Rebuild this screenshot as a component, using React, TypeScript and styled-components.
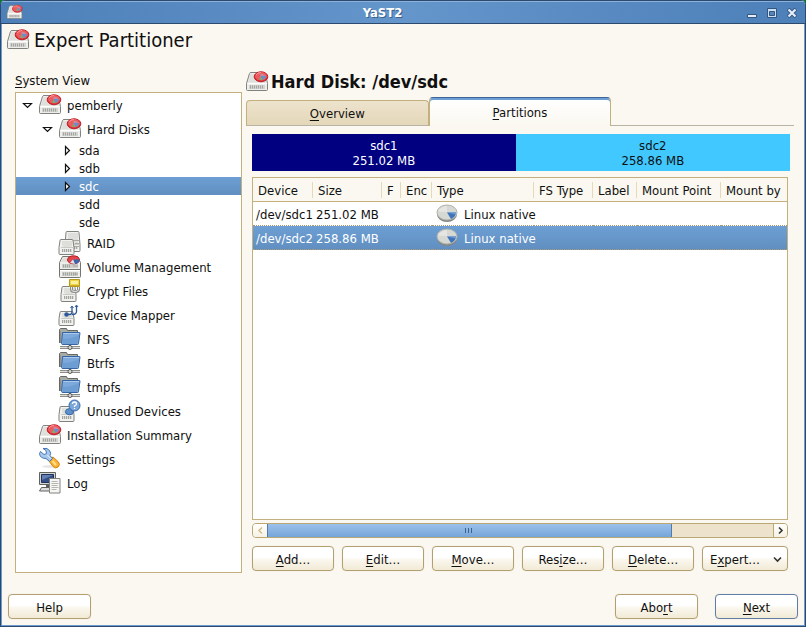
import React from "react";
import styled, { createGlobalStyle, css } from "styled-components";

const GlobalStyle = createGlobalStyle`
  *, *::before, *::after { box-sizing: border-box; }
  body {
    margin: 0;
    background: #0a7a2c;
    color: #101010;
    font: 13px/15px "DejaVu Sans Condensed", "DejaVu Sans", Verdana, sans-serif;
  }
  button { font: inherit; color: inherit; margin: 0; padding: 0; border: 0; background: none; }
  svg { display: block; flex: none; }
`;

const Window = styled.div`
  min-height: 100vh;
  display: flex;
  flex-direction: column;
  background: #fbf8f1;
  border: 1px solid #2b4a6e;
  border-top: 0;
  border-radius: 5px 5px 0 0;
  box-shadow: inset 1px 0 #6d9bce, inset -1px -1px #6d9bce;
  overflow: hidden;
`;

const TitleBar = styled.header`
  display: flex;
  align-items: center;
  height: 24px;
  padding: 1px 3px 0 5px;
  color: #fff;
  background: linear-gradient(90deg, #4d80b8, #6495cb 50%, #4d80b8);
  border-top: 1px solid #2b4a6e;
  border-bottom: 1px solid #2b4a6e;
  box-shadow: inset 0 1px #8bb2dd;
`;

const WindowTitle = styled.div`
  flex: 1;
  text-align: center;
  font-weight: bold;
  text-shadow: 1px 1px #3a618f;
`;

const WindowButton = styled.button`
  width: 20px;
  height: 20px;
  display: grid;
  place-items: center;
`;

const PageHeading = styled.h1`
  display: flex;
  align-items: center;
  gap: 4px;
  margin: 4px 5px 18px;
  font-size: 20px;
  line-height: 24px;
  font-weight: normal;
`;

const Columns = styled.main`
  flex: 1;
  display: grid;
  grid-template-columns: 29fr 70fr;
  gap: 4px;
  padding: 0 11px 0 14px;
`;

const SystemView = styled.section`
  display: flex;
  flex-direction: column;
`;

const ViewLabel = styled.div`
  line-height: 22px;
`;

const Key = styled.span`
  text-decoration: underline;
  text-decoration-thickness: 1px;
  text-underline-offset: 2px;
  text-decoration-skip-ink: none;
`;

const Tree = styled.ul`
  flex: 1;
  margin: 0;
  padding: 0;
  list-style: none;
  background: #fff;
  border: 1px solid #c3b07f;
`;

const selection = css`
  color: #fff;
  background: linear-gradient(#6d9fd4, #618ec0);
`;

const TreeRow = styled.button<{ $depth: number; $selected?: boolean; $compact?: boolean }>`
  display: flex;
  align-items: center;
  width: 100%;
  height: ${(p) => (p.$compact ? 18 : 24)}px;
  padding-left: ${(p) => p.$depth * 20 + 2}px;
  text-align: left;
  ${(p) => p.$selected && selection}
`;

const Twisty = styled.span`
  width: 20px;
  padding-right: 2px;
  display: grid;
  place-items: center;
`;

const TreeText = styled.span<{ $compact?: boolean }>`
  padding-top: 1px;
  padding-left: ${(p) => (p.$compact ? 1 : 5)}px;
`;

const Detail = styled.section`
  display: flex;
  flex-direction: column;
  min-width: 0;
`;

const DetailHeading = styled.h2`
  display: flex;
  align-items: center;
  gap: 2px;
  margin: 0 0 3px -1px;
  font-size: 18px;
  line-height: 24px;
  font-weight: bold;
`;

const Tabs = styled.div`
  display: grid;
  grid-template-columns: 1fr 1fr 1fr;
  align-items: end;
`;

const Tab = styled.button<{ $active?: boolean }>`
  height: 26px;
  border: 1px solid #c3b07f;
  border-bottom-color: #b9b3a6;
  border-radius: 4px 4px 0 0;
  background: linear-gradient(#ede3cd, #e4d7b9);
  ${(p) =>
    p.$active &&
    css`
      height: 29px;
      border-top: 1px solid #3c6594;
      border-bottom: 0;
      background: linear-gradient(#fff, #fbf8f1);
      box-shadow: inset 0 2px #6d9fd4;
    `}
`;

const TabRule = styled.div`
  border-bottom: 1px solid #b9b3a6;
`;

const Panel = styled.div`
  flex: 1;
  display: flex;
  flex-direction: column;
  padding: 8px 4px 2px 6px;
`;

const DiskBar = styled.div`
  display: flex;
  height: 37px;
  margin-bottom: 6px;
`;

const Segment = styled.div<{ $share: number; $fill: string; $ink: string }>`
  flex: ${(p) => p.$share} 1 0;
  padding-top: 4px;
  text-align: center;
  color: ${(p) => p.$ink};
  background: ${(p) => p.$fill};
`;

const Controls = styled.div`
  flex: 1;
  display: flex;
  flex-direction: column;
  margin-right: 2px;
`;

const TableFrame = styled.div`
  flex: 1;
  min-height: 160px;
  background: #fff;
  border: 1px solid #c3b07f;
  overflow: hidden;
`;

const Table = styled.table`
  width: 100%;
  table-layout: fixed;
  border-collapse: separate;
  border-spacing: 0;
  white-space: nowrap;
`;

const Column = styled.col<{ $width?: number }>`
  width: ${(p) => (p.$width ? `${p.$width}px` : "auto")};
`;

const HeaderCell = styled.th`
  height: 24px;
  padding: 1px 0 0 5px;
  text-align: left;
  font-weight: normal;
  border-bottom: 1px solid #c3b07f;
  background: #fbf8f1 linear-gradient(#e4d9b8, #e4d9b8) right center / 1px 16px no-repeat;

  &:last-child { background: #fbf8f1; }
`;

const Cell = styled.td`
  height: 24px;
  padding: 1px 0 0 3px;
  border-bottom: 1px dotted #a89a72;
`;

const BodyRow = styled.tr<{ $selected?: boolean }>`
  ${(p) => p.$selected && selection}
`;

const TypeCell = styled.span`
  display: flex;
  align-items: center;
  gap: 6px;
  padding-left: 1px;
`;

const ScrollBar = styled.div`
  display: flex;
  height: 15px;
  margin: 3px 0 8px;
  border: 1px solid #b9a775;
  border-radius: 4px;
  background: #ede3cd;
  overflow: hidden;
`;

const ScrollButton = styled.button<{ $end?: boolean }>`
  width: 14px;
  display: grid;
  place-items: center;
  background: linear-gradient(#fff, #f6f1e3);
  border: 0 solid #b9a775;
  border-width: ${(p) => (p.$end ? "0 0 0 1px" : "0")};
`;

const Track = styled.div`
  flex: 1;
  display: flex;
`;

const Thumb = styled.div`
  width: 80%;
  display: grid;
  place-items: center;
  border: 0 solid #4c7cb0;
  border-width: 0 1px;
  background: linear-gradient(#9cc1ea, #76a5d9);
  box-shadow: 0 -1px #4c7cb0, 0 1px #4c7cb0;
`;

const ButtonRow = styled.div`
  display: flex;
  gap: 8px;
`;

const Button = styled.button<{ $main?: boolean }>`
  height: 25px;
  min-width: 83px;
  padding-top: 1px;
  border: 1px solid ${(p) => (p.$main ? "#5f7ea6" : "#b3a071")};
  border-radius: 4px;
  background: linear-gradient(#fff 45%, #faf7ee 55%, #f1ead6);
  box-shadow: 0 0 1px #ded2b3;
`;

const ActionButton = styled(Button)`
  flex: 1;
  min-width: 0;
`;

const MenuButton = styled(Button)`
  flex: none;
  min-width: 86px;
  padding: 1px 5px 0 7px;
  display: flex;
  align-items: center;
  justify-content: space-between;
`;

const Footer = styled.footer`
  display: flex;
  gap: 17px;
  padding: 21px 7px 7px;
`;

const Spacer = styled.div`
  flex: 1;
`;

type IconProps = { size?: number };

const Svg = ({ size = 24, children }: IconProps & { children: React.ReactNode }) => (
  <svg width={size} height={size} viewBox="0 0 24 24" fill="none" aria-hidden="true">
    {children}
  </svg>
);

const Slots = ({ x, y, n }: { x: number; y: number; n: number }) => (
  <>
    {Array.from({ length: n }, (_, i) => (
      <path key={i} d={`M${x + i * 2} ${y}v3`} stroke="#a3a5a1" />
    ))}
  </>
);

const HardDisk = ({ size }: IconProps) => (
  <Svg size={size}>
    <path d="M4.500 3.500q.300-1 1.500-1h13l1.500 1 2 10v6q0 1-1 1h-19q-1 0-1-1v-6z" fill="#eeefec" stroke="#80827d" />
    <path d="M5.500 4h13.500l2 8.500h-18z" fill="#dfe0dc" />
    <path d="M2.500 13.500h19" stroke="#fff" />
    <path d="M4 15h16v4H4z" fill="#d3d4d0" />
    <Slots x={5.5} y={15.5} n={7} />
    <ellipse cx="16" cy="6.800" rx="6.800" ry="5" fill="#d8252e" stroke="#bd2029" />
    <ellipse cx="16" cy="6.200" rx="6" ry="4.300" fill="#ef5a5e" />
    <path d="M11 5q1.500-2.500 5-2.500" stroke="#ff9a99" />
    <path d="M15.500 6l-1.500 3.500q2 1 4 .500z" fill="#8aa56a" />
    <path d="M15.500 6l5.500 0q0 2.500-3 4z" fill="#6a8ecb" />
    <path d="M15.500 6v-2.500q3.500 0 5 2.500z" fill="#c98aa0" />
  </Svg>
);

const SmallDisk = ({ x, y, h = 14, w = 16 }: { x: number; y: number; h?: number; w?: number }) => (
  <g transform={`translate(${x} ${y})`}>
    <path
      d={`M2.500.500h${w - 5}q1 0 1 1l1 ${h - 8}v6q0 1-1 1h-${w - 3}q-1 0-1-1v-6l1-${h - 8}q0-1 1-1z`}
      transform="translate(-.500 0)"
      fill="#f1f2ef"
      stroke="#80827d"
    />
    <path d={`M3 2h${w - 6}v${h - 10}q-${(w - 6) / 2} 3-${w - 6} 0z`} fill="#dddfdb" />
    <path d={`M2 ${h - 6.5}h${w - 4}`} stroke="#c9cbc6" />
    <path d={`M3 ${h - 5}h${w - 6}v3h-${w - 6}z`} fill="#dadbd7" />
    <Slots x={3.5} y={h - 5} n={5} />
  </g>
);

const Raid = () => (
  <Svg>
    <SmallDisk x={7} y={0} h={20} />
    <path d="M8.500 9.500h13M17 12.500h4M17 15.500h4" stroke="#a9aba7" />
    <SmallDisk x={1} y={8} h={15} />
  </Svg>
);

const Volumes = () => (
  <Svg>
    <path d="M4.500 1.500h15l3 6v14q0 1-1 1h-19q-1 0-1-1v-14z" fill="#eeefec" stroke="#73756f" />
    <path d="M5 2.500h14l2 4.500h-18z" fill="#dfe0dc" />
    <path d="M2 15.500h20" stroke="#fff" />
    <path d="M2 14.500h20" stroke="#73756f" />
    <path d="M4 11h16M4 19h16" stroke="#cdcfca" strokeWidth="4" />
    <Slots x={5.5} y={9.5} n={4} />
    <Slots x={5.5} y={17.5} n={7} />
    <path d="M15 11h5M15 19h5" stroke="#a3a5a1" />
    <ellipse cx="15.500" cy="4.800" rx="6" ry="4" fill="#e1474b" stroke="#b51c23" />
    <path d="M15 4.500l6.500 0q0 4-4.500 4.500z" fill="#3a68b0" />
    <path d="M15 4.500l-3 3.500 5 1z" fill="#dce5ef" />
  </Svg>
);

const Crypt = () => (
  <Svg>
    <SmallDisk x={3} y={7} h={15} />
    <path d="M13.500 8v2.500q0 2 3.500 2t3.500-2V8" stroke="#8a8c87" strokeWidth="3" />
    <path d="M13.500 8v2.500q0 2 3.500 2t3.500-2V8" stroke="#ecedeb" />
    <path d="M11.500.500h10v7h-10z" fill="#efd548" stroke="#b59a1d" />
    <path d="M13 2h7v3h-7z" fill="#faf0a0" />
    <path d="M12 6.500h9" stroke="#cfae25" />
  </Svg>
);

const Mapper = () => (
  <Svg>
    <SmallDisk x={1} y={8} h={14} />
    <path d="M8 11.500h3.500q2.500 0 2.500-2.500V4M14 11.500q4.500 0 4.500-3V3" stroke="#2d5797" strokeWidth="1.300" />
    <path d="M12.500 5l1.500-2 1.500 2M17 4l1.500-2 1.500 2" stroke="#2d5797" />
    <circle cx="8.500" cy="11.500" r="2.200" fill="#2d5797" />
  </Svg>
);

const NetFolder = () => (
  <Svg>
    <path d="M1.500 16V2.500l1-1h6l1 2h10v3" fill="#a9aba6" stroke="#666863" />
    <path d="M2.500 16V4.500" stroke="#8b8d88" />
    <path d="M4.500 5.500h17q.500 0 .500.500l-1.500 10.500q0 1-1 1H5q-1.500 0-1.500-1z" fill="#7da9dc" stroke="#3465a4" />
    <path d="M5.500 6.500h15.500" stroke="#a9c8eb" />
    <path d="M5 12q8 0 15.500-4l-1.200 9H5z" fill="#6e9dd3" />
    <path d="M12 18v2" stroke="#555753" strokeWidth="2" />
    <path d="M2 20.500h20" stroke="#8b8d88" strokeWidth="3" />
    <path d="M2 20.500h20" stroke="#dedfdc" />
    <circle cx="12" cy="20.500" r="2" fill="#d9dad8" stroke="#555753" />
  </Svg>
);

const Unused = () => (
  <Svg>
    <SmallDisk x={1} y={7} h={15} />
    <path d="M8 14.500q-1.500-2 .500-4l3-1 4 3.500-1 2q-3.500 2-6.500-.500z" fill="#5f8fca" stroke="#3768a8" />
    <circle cx="16.500" cy="6.500" r="5.500" fill="#7ba6da" stroke="#3768a8" />
    <path d="M14.500 5q0-2 2-2t2 2q0 1-2 2v1M16.500 9v1" stroke="#fff" strokeWidth="1.300" />
  </Svg>
);

const Wrench = () => (
  <Svg>
    <ellipse cx="12" cy="19.500" rx="8" ry="1.500" fill="#e7e7e7" />
    <path d="M12 12l3-2 5.500 5q2 3-.500 5t-5-.500l-4-5.500z" fill="#f9b233" stroke="#d9820b" />
    <path d="M14.500 14l3.500 4" stroke="#fde08c" strokeWidth="2" />
    <path d="M2.500 4.500l3.500 3 2.500-1-.500-3-3-2q4.500-1 6.500 2t.500 5l2.500 3-3 3-3.500-3q-6 0-6.500-5z" fill="#a9c9ec" stroke="#4578b5" />
    <path d="M9.500 8l3 3.500" stroke="#e2eefb" />
  </Svg>
);

const LogIcon = () => (
  <Svg>
    <path d="M1.500 1.500h16v12h-16z" fill="#d3d5d1" stroke="#60625e" />
    <path d="M3.500 3.500h12v8h-12z" fill="#344f88" stroke="#202f5c" />
    <path d="M4 4h11L4 9z" fill="#6380b5" />
    <path d="M8 14h4v2H8z" fill="#5a5c58" />
    <path d="M3.500 16.500h11l1 3.500h-14z" fill="#dcdedb" stroke="#60625e" />
    <path d="M11.500 7.500h10.500v14.500H11.500z" fill="#f6f7f5" stroke="#80827d" />
    <path d="M13.500 10.500h6M13.500 12.500h7M13.500 14.500h6M13.500 16.500h7M13.500 18.500h5" stroke="#b4b6b1" />
  </Svg>
);

const PartitionIcon = () => (
  <svg width="22" height="20" viewBox="0 0 22 20" aria-hidden="true">
    <ellipse cx="11" cy="10.500" rx="10" ry="7.500" fill="#858782" />
    <ellipse cx="11" cy="8.500" rx="10" ry="7.500" fill="#d6d8d4" stroke="#b0b2ad" />
    <path d="M2 7.500q2-5 9-5.500v6z" fill="#e5e6e3" />
    <path d="M11 8.500h9q-.500 4.500-5 6.500z" fill="#3e74b9" />
    <path d="M11 8.500h9l-.500 2z" fill="#6b9ad3" />
  </svg>
);

const Arrow = ({ open }: { open?: boolean }) => (
  <svg width="11" height="11" viewBox="0 0 11 11" fill="#fff" stroke="#111" aria-hidden="true">
    <path d={open ? "M1.500 3.500h8l-4 4z" : "M3.500 1.500v8l4-4z"} strokeWidth="1.200" />
  </svg>
);

const Chevron = ({ dir, color = "#333" }: { dir: "left" | "right" | "down"; color?: string }) => {
  const paths = { left: "M6 1.500l-3 3 3 3", right: "M3 1.500l3 3-3 3", down: "M1 2.500l3.500 3.500 3.500-3.500" };
  return (
    <svg width="9" height="9" viewBox="0 0 9 9" fill="none" stroke={color} strokeWidth="1.600" aria-hidden="true">
      <path d={paths[dir]} />
    </svg>
  );
};

type Node = {
  label: string;
  depth: number;
  icon?: React.ComponentType<IconProps>;
  open?: boolean;
  selected?: boolean;
};

const nodes: Node[] = [
  { label: "pemberly", depth: 0, icon: HardDisk, open: true },
  { label: "Hard Disks", depth: 1, icon: HardDisk, open: true },
  { label: "sda", depth: 2, open: false },
  { label: "sdb", depth: 2, open: false },
  { label: "sdc", depth: 2, open: false, selected: true },
  { label: "sdd", depth: 2 },
  { label: "sde", depth: 2 },
  { label: "RAID", depth: 1, icon: Raid },
  { label: "Volume Management", depth: 1, icon: Volumes },
  { label: "Crypt Files", depth: 1, icon: Crypt },
  { label: "Device Mapper", depth: 1, icon: Mapper },
  { label: "NFS", depth: 1, icon: NetFolder },
  { label: "Btrfs", depth: 1, icon: NetFolder },
  { label: "tmpfs", depth: 1, icon: NetFolder },
  { label: "Unused Devices", depth: 1, icon: Unused },
  { label: "Installation Summary", depth: 0, icon: HardDisk },
  { label: "Settings", depth: 0, icon: Wrench },
  { label: "Log", depth: 0, icon: LogIcon },
];

const columns: { title: string; width?: number }[] = [
  { title: "Device", width: 60 },
  { title: "Size", width: 69 },
  { title: "F", width: 19 },
  { title: "Enc", width: 31 },
  { title: "Type", width: 102 },
  { title: "FS Type", width: 59 },
  { title: "Label", width: 44 },
  { title: "Mount Point", width: 84 },
  { title: "Mount by" },
];

const partitions = [
  { name: "sdc1", size: "251.02 MB", share: 49, fill: "#000080", ink: "#ffffff" },
  { name: "sdc2", size: "258.86 MB", share: 51, fill: "#40c8ff", ink: "#101010", selected: true },
];

const Mnemonic = ({ text, at = 0 }: { text: string; at?: number }) => (
  <span>
    {text.slice(0, at)}
    <Key>{text[at]}</Key>
    {text.slice(at + 1)}
  </span>
);

export default function App() {
  return (
    <>
      <GlobalStyle />
      <Window>
        <TitleBar>
          <HardDisk size={17} />
          <WindowTitle>YaST2</WindowTitle>
          <WindowButton aria-label="Minimize">
            <svg width="10" height="10" viewBox="0 0 10 10">
              <path d="M.500 6.500h9v3h-9z" fill="#e4eefa" stroke="#33567f" />
            </svg>
          </WindowButton>
          <WindowButton aria-label="Maximize">
            <svg width="10" height="10" viewBox="0 0 10 10">
              <path d="M.500.500h9v9h-9z" fill="#cddff4" stroke="#33567f" />
              <path d="M2.500 3.500h5v4h-5z" fill="#5585bb" stroke="#33567f" />
            </svg>
          </WindowButton>
          <WindowButton aria-label="Close">
            <svg width="10" height="10" viewBox="0 0 10 10">
              <path d="M1 1l8 8M9 1l-8 8" stroke="#33567f" strokeWidth="4" />
              <path d="M1.500 1.500l7 7M8.500 1.500l-7 7" stroke="#e4eefa" strokeWidth="2.200" />
            </svg>
          </WindowButton>
        </TitleBar>

        <PageHeading>
          <HardDisk />
          Expert Partitioner
        </PageHeading>

        <Columns>
          <SystemView>
            <ViewLabel id="system-view">
              <Mnemonic text="System View" />
            </ViewLabel>
            <Tree aria-labelledby="system-view">
              {nodes.map(({ label, depth, icon: Icon, open, selected }) => (
                <li key={label}>
                  <TreeRow $depth={depth} $selected={selected} $compact={!Icon} aria-expanded={open}>
                    <Twisty>{open !== undefined && <Arrow open={open} />}</Twisty>
                    {Icon && <Icon />}
                    <TreeText $compact={!Icon}>{label}</TreeText>
                  </TreeRow>
                </li>
              ))}
            </Tree>
          </SystemView>

          <Detail>
            <DetailHeading>
              <HardDisk />
              Hard Disk: /dev/sdc
            </DetailHeading>
            <Tabs role="tablist">
              <Tab role="tab" aria-selected={false}>
                <Mnemonic text="Overview" />
              </Tab>
              <Tab role="tab" aria-selected $active>
                <Mnemonic text="Partitions" />
              </Tab>
              <TabRule />
            </Tabs>
            <Panel role="tabpanel">
              <DiskBar>
                {partitions.map((p) => (
                  <Segment key={p.name} $share={p.share} $fill={p.fill} $ink={p.ink}>
                    {p.name}
                    <br />
                    {p.size}
                  </Segment>
                ))}
              </DiskBar>
              <Controls>
                <TableFrame>
                  <Table>
                    <colgroup>
                      {columns.map((c) => (
                        <Column key={c.title} $width={c.width} />
                      ))}
                    </colgroup>
                    <thead>
                      <tr>
                        {columns.map((c) => (
                          <HeaderCell key={c.title}>{c.title}</HeaderCell>
                        ))}
                      </tr>
                    </thead>
                    <tbody>
                      {partitions.map((p) => (
                        <BodyRow key={p.name} $selected={p.selected}>
                          <Cell>/dev/{p.name}</Cell>
                          <Cell>{p.size}</Cell>
                          <Cell />
                          <Cell />
                          <Cell>
                            <TypeCell>
                              <PartitionIcon />
                              Linux native
                            </TypeCell>
                          </Cell>
                          <Cell />
                          <Cell />
                          <Cell />
                          <Cell />
                        </BodyRow>
                      ))}
                    </tbody>
                  </Table>
                </TableFrame>
                <ScrollBar>
                  <ScrollButton aria-label="Scroll left">
                    <Chevron dir="left" color="#d3c08f" />
                  </ScrollButton>
                  <Track>
                    <Thumb>
                      <svg width="8" height="5" viewBox="0 0 8 5" stroke="#3b6290" aria-hidden="true">
                        <path d="M.500 0v5M3.500 0v5M6.500 0v5" />
                      </svg>
                    </Thumb>
                  </Track>
                  <ScrollButton $end aria-label="Scroll right">
                    <Chevron dir="right" />
                  </ScrollButton>
                </ScrollBar>
                <ButtonRow>
                  <ActionButton><Mnemonic text="Add…" /></ActionButton>
                  <ActionButton><Mnemonic text="Edit…" /></ActionButton>
                  <ActionButton><Mnemonic text="Move…" /></ActionButton>
                  <ActionButton><Mnemonic text="Resize…" at={3} /></ActionButton>
                  <ActionButton><Mnemonic text="Delete…" /></ActionButton>
                  <MenuButton aria-haspopup="menu">
                    <Mnemonic text="Expert…" at={1} />
                    <Chevron dir="down" />
                  </MenuButton>
                </ButtonRow>
              </Controls>
            </Panel>
          </Detail>
        </Columns>

        <Footer>
          <Button>Help</Button>
          <Spacer />
          <Button><Mnemonic text="Abort" at={3} /></Button>
          <Button $main><Mnemonic text="Next" /></Button>
        </Footer>
      </Window>
    </>
  );
}
